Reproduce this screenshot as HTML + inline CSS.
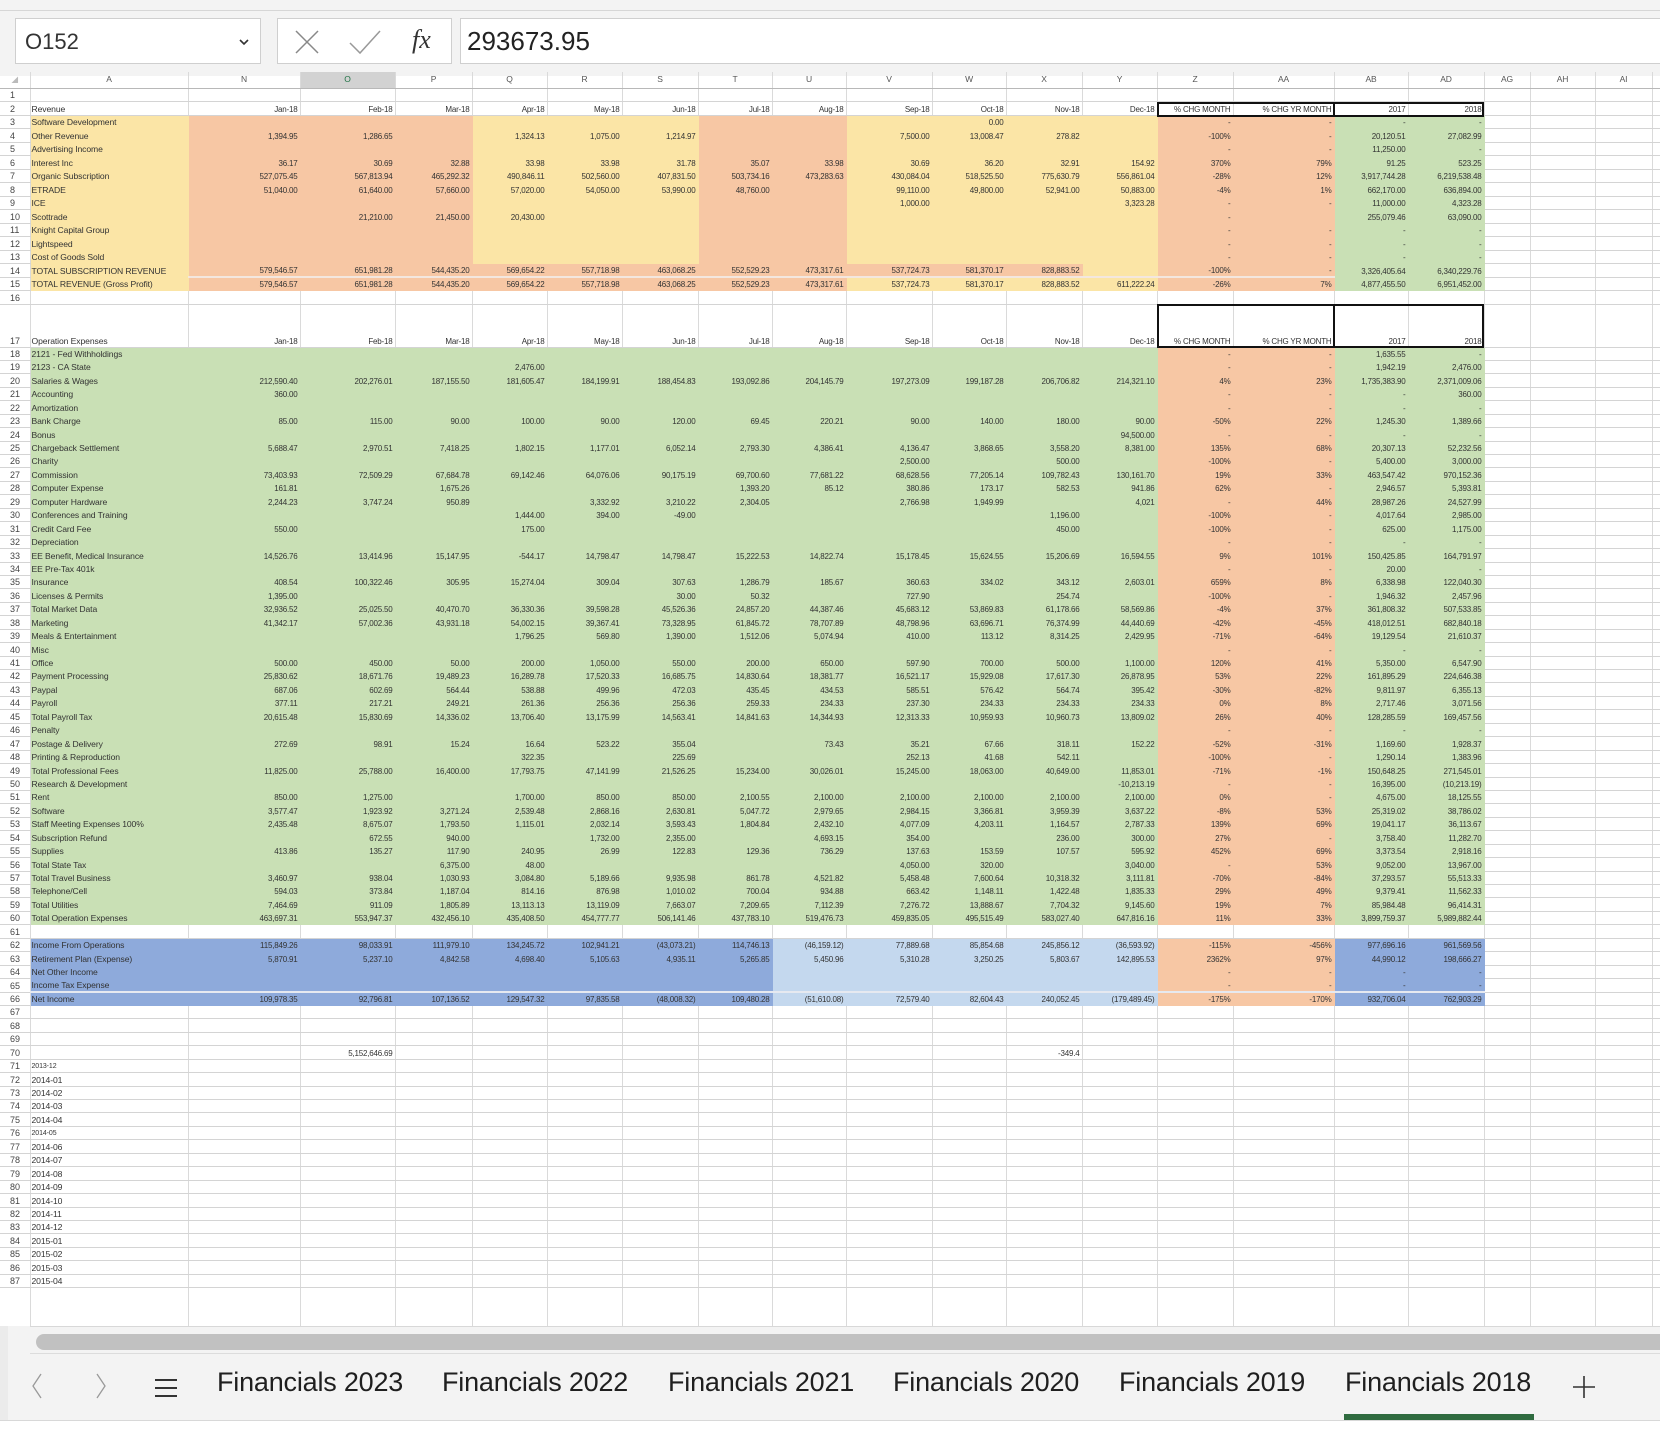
<!DOCTYPE html>
<html><head><meta charset="utf-8">
<style>
*{box-sizing:border-box;margin:0;padding:0}
body{width:1660px;height:1433px;overflow:hidden;background:#fff;font-family:"Liberation Sans",sans-serif;position:relative;color:#222}
.top{position:absolute;left:0;top:0;width:1660px;height:76px;background:#f3f3f3;border-top:10px solid #f3f3f3}
.topline{position:absolute;left:0;top:10px;width:1660px;height:1px;background:#d6d6d6}
.nb{position:absolute;top:18px;height:46px;background:#fff;border:1px solid #cfcfcf}
#grid{position:absolute;left:0;top:72px;border-collapse:collapse;table-layout:fixed;width:1660px}
#grid td{border-right:1px solid #dadada;border-bottom:1px solid #d4d4d4;font-size:8px;line-height:9px;white-space:nowrap;overflow:hidden;text-align:right;vertical-align:bottom;padding:0 2px 1px 1px;color:#333;letter-spacing:-0.2px}
#grid td:nth-child(1){text-align:left;font-size:9px;padding-left:10px;color:#444;letter-spacing:0}
#grid td:nth-child(2){text-align:left;font-size:8.6px;letter-spacing:-0.1px}
#grid tr{height:13.45px}
#grid tr.h1{height:13.5px}
#grid tr.hd{height:16px}
#grid tr.hd td{text-align:center;color:#555;font-size:8.5px;vertical-align:middle;padding:0;border-bottom:1px solid #b8b8b8}
#grid tr.hd td.sel{background:#d2d2d2;color:#217346}
#grid tr.r17{height:43px}
#grid tr.r1 td:nth-child(2),#grid tr.r2 td:nth-child(2),#grid tr.r3 td:nth-child(2){background:#fbe5a6;border-color:#fbe5a6}
#grid tr.r1 td:nth-child(n+3):nth-child(-n+5),#grid tr.r1 td:nth-child(n+9):nth-child(-n+10){background:#f7c7a4;border-color:#f7c7a4}
#grid tr.r1 td:nth-child(n+6):nth-child(-n+8),#grid tr.r1 td:nth-child(n+11):nth-child(-n+14){background:#fbe5a6;border-color:#fbe5a6}
#grid tr.r2 td:nth-child(n+3):nth-child(-n+13){background:#f7c7a4;border-color:#f7c7a4}
#grid tr.r2 td:nth-child(14){background:#fbe5a6;border-color:#fbe5a6}
#grid tr.r3 td:nth-child(n+3):nth-child(-n+10){background:#f7c7a4;border-color:#f7c7a4}
#grid tr.r3 td:nth-child(n+11):nth-child(-n+14){background:#fbe5a6;border-color:#fbe5a6}
#grid tr.r1 td:nth-child(n+15):nth-child(-n+16),#grid tr.r2 td:nth-child(n+15):nth-child(-n+16),#grid tr.r3 td:nth-child(n+15):nth-child(-n+16),
#grid tr.e td:nth-child(n+15):nth-child(-n+16),#grid tr.i td:nth-child(n+15):nth-child(-n+16){background:#f7c7a4;border-color:#f7c7a4}
#grid tr.r1 td:nth-child(n+17):nth-child(-n+18),#grid tr.r2 td:nth-child(n+17):nth-child(-n+18),#grid tr.r3 td:nth-child(n+17):nth-child(-n+18){background:#c9e0b5;border-color:#c9e0b5}
#grid tr.e td:nth-child(n+2):nth-child(-n+14),#grid tr.e td:nth-child(n+17):nth-child(-n+18){background:#c9e0b5;border-color:#c9e0b5}
#grid tr.i td:nth-child(n+2):nth-child(-n+9),#grid tr.i td:nth-child(n+17):nth-child(-n+18){background:#8eaadb;border-color:#8eaadb}
#grid tr.i td:nth-child(n+10):nth-child(-n+14){background:#c4d8ee;border-color:#c4d8ee}
#grid tr.r2 td:nth-child(n+3):nth-child(-n+16){border-bottom:2px solid #f3e7df}
#grid tr.i65 td:nth-child(n+2):nth-child(-n+18){border-bottom:2px solid #e6e9f0}
.box{position:absolute;border:2px solid #111}
.tabs{position:absolute;left:0;top:1326px;width:1660px;height:94px;background:#f3f3f3}
.tab{position:absolute;top:1367px;font-size:27px;color:#1f1f1f;letter-spacing:-0.2px}
</style></head><body>
<div class="top"></div>
<div class="topline"></div>
<div class="nb" style="left:15px;width:246px"><span style="position:absolute;left:9px;top:10px;font-size:22px;color:#333">O152</span><svg style="position:absolute;left:222px;top:18px" width="12" height="10"><path d="M2 3 L6 7 L10 3" stroke="#333" stroke-width="1.6" fill="none"/></svg></div>
<div class="nb" style="left:277px;width:175px"><svg style="position:absolute;left:16px;top:10px" width="26" height="26"><path d="M2 2 L24 24 M24 2 L2 24" stroke="#888" stroke-width="1.5"/></svg><svg style="position:absolute;left:70px;top:10px" width="34" height="26"><path d="M2 14 L12 24 L32 2" stroke="#999" stroke-width="1.5" fill="none"/></svg><span style="position:absolute;left:134px;top:6px;font-family:'Liberation Serif',serif;font-style:italic;font-size:26px;color:#333">fx</span></div>
<div class="nb" style="left:460px;width:1210px"><span style="position:absolute;left:6px;top:7px;font-size:26px;color:#222">293673.95</span></div>

<table id="grid">
<colgroup><col style="width:30px"><col style="width:158px"><col style="width:112px"><col style="width:95px"><col style="width:77px"><col style="width:75px"><col style="width:75px"><col style="width:76px"><col style="width:74px"><col style="width:74px"><col style="width:86px"><col style="width:74px"><col style="width:76px"><col style="width:75px"><col style="width:76px"><col style="width:101px"><col style="width:74px"><col style="width:76px"><col style="width:46px"><col style="width:65px"><col style="width:57px"><col style="width:8px"></colgroup>
<tr class="hd"><td style="color:#bbb">◢<td>A<td>N<td class="sel">O<td>P<td>Q<td>R<td>S<td>T<td>U<td>V<td>W<td>X<td>Y<td>Z<td>AA<td>AB<td>AD<td>AG<td>AH<td>AI<td>
<tr class="h1"><td>1<td><td><td><td><td><td><td><td><td><td><td><td><td><td><td><td><td><td><td><td><td>
<tr class="h1"><td>2<td>Revenue<td>Jan-18<td>Feb-18<td>Mar-18<td>Apr-18<td>May-18<td>Jun-18<td>Jul-18<td>Aug-18<td>Sep-18<td>Oct-18<td>Nov-18<td>Dec-18<td>% CHG MONTH<td>% CHG YR MONTH<td>2017<td>2018<td><td><td><td>
<tr class="h1 r1"><td>3<td>Software Development<td><td><td><td><td><td><td><td><td><td>0.00<td><td><td>-<td>-<td>-<td>-<td><td><td><td>
<tr class="h1 r1"><td>4<td>Other Revenue<td>1,394.95<td>1,286.65<td><td>1,324.13<td>1,075.00<td>1,214.97<td><td><td>7,500.00<td>13,008.47<td>278.82<td><td>-100%<td>-<td>20,120.51<td>27,082.99<td><td><td><td>
<tr class="h1 r1"><td>5<td>Advertising Income<td><td><td><td><td><td><td><td><td><td><td><td><td>-<td>-<td>11,250.00<td>-<td><td><td><td>
<tr class="h1 r1"><td>6<td>Interest Inc<td>36.17<td>30.69<td>32.88<td>33.98<td>33.98<td>31.78<td>35.07<td>33.98<td>30.69<td>36.20<td>32.91<td>154.92<td>370%<td>79%<td>91.25<td>523.25<td><td><td><td>
<tr class="h1 r1"><td>7<td>Organic Subscription<td>527,075.45<td>567,813.94<td>465,292.32<td>490,846.11<td>502,560.00<td>407,831.50<td>503,734.16<td>473,283.63<td>430,084.04<td>518,525.50<td>775,630.79<td>556,861.04<td>-28%<td>12%<td>3,917,744.28<td>6,219,538.48<td><td><td><td>
<tr class="h1 r1"><td>8<td>ETRADE<td>51,040.00<td>61,640.00<td>57,660.00<td>57,020.00<td>54,050.00<td>53,990.00<td>48,760.00<td><td>99,110.00<td>49,800.00<td>52,941.00<td>50,883.00<td>-4%<td>1%<td>662,170.00<td>636,894.00<td><td><td><td>
<tr class="h1 r1"><td>9<td>ICE<td><td><td><td><td><td><td><td><td>1,000.00<td><td><td>3,323.28<td>-<td>-<td>11,000.00<td>4,323.28<td><td><td><td>
<tr class="h1 r1"><td>10<td>Scottrade<td><td>21,210.00<td>21,450.00<td>20,430.00<td><td><td><td><td><td><td><td><td>-<td><td>255,079.46<td>63,090.00<td><td><td><td>
<tr class="h1 r1"><td>11<td>Knight Capital Group<td><td><td><td><td><td><td><td><td><td><td><td><td>-<td>-<td>-<td>-<td><td><td><td>
<tr class="h1 r1"><td>12<td>Lightspeed<td><td><td><td><td><td><td><td><td><td><td><td><td>-<td>-<td>-<td>-<td><td><td><td>
<tr class="h1 r1"><td>13<td>Cost of Goods Sold<td><td><td><td><td><td><td><td><td><td><td><td><td>-<td>-<td>-<td>-<td><td><td><td>
<tr class="h1 r2"><td>14<td>TOTAL SUBSCRIPTION REVENUE<td>579,546.57<td>651,981.28<td>544,435.20<td>569,654.22<td>557,718.98<td>463,068.25<td>552,529.23<td>473,317.61<td>537,724.73<td>581,370.17<td>828,883.52<td><td>-100%<td>-<td>3,326,405.64<td>6,340,229.76<td><td><td><td>
<tr class="h1 r3"><td>15<td>TOTAL REVENUE (Gross Profit)<td>579,546.57<td>651,981.28<td>544,435.20<td>569,654.22<td>557,718.98<td>463,068.25<td>552,529.23<td>473,317.61<td>537,724.73<td>581,370.17<td>828,883.52<td>611,222.24<td>-26%<td>7%<td>4,877,455.50<td>6,951,452.00<td><td><td><td>
<tr class="h1"><td>16<td><td><td><td><td><td><td><td><td><td><td><td><td><td><td><td><td><td><td><td><td>
<tr class="r17"><td>17<td>Operation Expenses<td>Jan-18<td>Feb-18<td>Mar-18<td>Apr-18<td>May-18<td>Jun-18<td>Jul-18<td>Aug-18<td>Sep-18<td>Oct-18<td>Nov-18<td>Dec-18<td>% CHG MONTH<td>% CHG YR MONTH<td>2017<td>2018<td><td><td><td>
<tr class="e"><td>18<td>2121 - Fed Withholdings<td><td><td><td><td><td><td><td><td><td><td><td><td>-<td>-<td>1,635.55<td>-<td><td><td><td>
<tr class="e"><td>19<td>2123 - CA State<td><td><td><td>2,476.00<td><td><td><td><td><td><td><td><td>-<td>-<td>1,942.19<td>2,476.00<td><td><td><td>
<tr class="e"><td>20<td>Salaries &amp; Wages<td>212,590.40<td>202,276.01<td>187,155.50<td>181,605.47<td>184,199.91<td>188,454.83<td>193,092.86<td>204,145.79<td>197,273.09<td>199,187.28<td>206,706.82<td>214,321.10<td>4%<td>23%<td>1,735,383.90<td>2,371,009.06<td><td><td><td>
<tr class="e"><td>21<td>Accounting<td>360.00<td><td><td><td><td><td><td><td><td><td><td><td>-<td>-<td>-<td>360.00<td><td><td><td>
<tr class="e"><td>22<td>Amortization<td><td><td><td><td><td><td><td><td><td><td><td><td>-<td>-<td>-<td>-<td><td><td><td>
<tr class="e"><td>23<td>Bank Charge<td>85.00<td>115.00<td>90.00<td>100.00<td>90.00<td>120.00<td>69.45<td>220.21<td>90.00<td>140.00<td>180.00<td>90.00<td>-50%<td>22%<td>1,245.30<td>1,389.66<td><td><td><td>
<tr class="e"><td>24<td>Bonus<td><td><td><td><td><td><td><td><td><td><td><td>94,500.00<td>-<td>-<td>-<td>-<td><td><td><td>
<tr class="e"><td>25<td>Chargeback Settlement<td>5,688.47<td>2,970.51<td>7,418.25<td>1,802.15<td>1,177.01<td>6,052.14<td>2,793.30<td>4,386.41<td>4,136.47<td>3,868.65<td>3,558.20<td>8,381.00<td>135%<td>68%<td>20,307.13<td>52,232.56<td><td><td><td>
<tr class="e"><td>26<td>Charity<td><td><td><td><td><td><td><td><td>2,500.00<td><td>500.00<td><td>-100%<td>-<td>5,400.00<td>3,000.00<td><td><td><td>
<tr class="e"><td>27<td>Commission<td>73,403.93<td>72,509.29<td>67,684.78<td>69,142.46<td>64,076.06<td>90,175.19<td>69,700.60<td>77,681.22<td>68,628.56<td>77,205.14<td>109,782.43<td>130,161.70<td>19%<td>33%<td>463,547.42<td>970,152.36<td><td><td><td>
<tr class="e"><td>28<td>Computer Expense<td>161.81<td><td>1,675.26<td><td><td><td>1,393.20<td>85.12<td>380.86<td>173.17<td>582.53<td>941.86<td>62%<td>-<td>2,946.57<td>5,393.81<td><td><td><td>
<tr class="e"><td>29<td>Computer Hardware<td>2,244.23<td>3,747.24<td>950.89<td><td>3,332.92<td>3,210.22<td>2,304.05<td><td>2,766.98<td>1,949.99<td><td>4,021<td>-<td>44%<td>28,987.26<td>24,527.99<td><td><td><td>
<tr class="e"><td>30<td>Conferences and Training<td><td><td><td>1,444.00<td>394.00<td>-49.00<td><td><td><td><td>1,196.00<td><td>-100%<td>-<td>4,017.64<td>2,985.00<td><td><td><td>
<tr class="e"><td>31<td>Credit Card Fee<td>550.00<td><td><td>175.00<td><td><td><td><td><td><td>450.00<td><td>-100%<td>-<td>625.00<td>1,175.00<td><td><td><td>
<tr class="e"><td>32<td>Depreciation<td><td><td><td><td><td><td><td><td><td><td><td><td>-<td>-<td>-<td>-<td><td><td><td>
<tr class="e"><td>33<td>EE Benefit, Medical Insurance<td>14,526.76<td>13,414.96<td>15,147.95<td>-544.17<td>14,798.47<td>14,798.47<td>15,222.53<td>14,822.74<td>15,178.45<td>15,624.55<td>15,206.69<td>16,594.55<td>9%<td>101%<td>150,425.85<td>164,791.97<td><td><td><td>
<tr class="e"><td>34<td>EE Pre-Tax 401k<td><td><td><td><td><td><td><td><td><td><td><td><td>-<td>-<td>20.00<td>-<td><td><td><td>
<tr class="e"><td>35<td>Insurance<td>408.54<td>100,322.46<td>305.95<td>15,274.04<td>309.04<td>307.63<td>1,286.79<td>185.67<td>360.63<td>334.02<td>343.12<td>2,603.01<td>659%<td>8%<td>6,338.98<td>122,040.30<td><td><td><td>
<tr class="e"><td>36<td>Licenses &amp; Permits<td>1,395.00<td><td><td><td><td>30.00<td>50.32<td><td>727.90<td><td>254.74<td><td>-100%<td>-<td>1,946.32<td>2,457.96<td><td><td><td>
<tr class="e"><td>37<td>Total Market Data<td>32,936.52<td>25,025.50<td>40,470.70<td>36,330.36<td>39,598.28<td>45,526.36<td>24,857.20<td>44,387.46<td>45,683.12<td>53,869.83<td>61,178.66<td>58,569.86<td>-4%<td>37%<td>361,808.32<td>507,533.85<td><td><td><td>
<tr class="e"><td>38<td>Marketing<td>41,342.17<td>57,002.36<td>43,931.18<td>54,002.15<td>39,367.41<td>73,328.95<td>61,845.72<td>78,707.89<td>48,798.96<td>63,696.71<td>76,374.99<td>44,440.69<td>-42%<td>-45%<td>418,012.51<td>682,840.18<td><td><td><td>
<tr class="e"><td>39<td>Meals &amp; Entertainment<td><td><td><td>1,796.25<td>569.80<td>1,390.00<td>1,512.06<td>5,074.94<td>410.00<td>113.12<td>8,314.25<td>2,429.95<td>-71%<td>-64%<td>19,129.54<td>21,610.37<td><td><td><td>
<tr class="e"><td>40<td>Misc<td><td><td><td><td><td><td><td><td><td><td><td><td>-<td>-<td>-<td>-<td><td><td><td>
<tr class="e"><td>41<td>Office<td>500.00<td>450.00<td>50.00<td>200.00<td>1,050.00<td>550.00<td>200.00<td>650.00<td>597.90<td>700.00<td>500.00<td>1,100.00<td>120%<td>41%<td>5,350.00<td>6,547.90<td><td><td><td>
<tr class="e"><td>42<td>Payment Processing<td>25,830.62<td>18,671.76<td>19,489.23<td>16,289.78<td>17,520.33<td>16,685.75<td>14,830.64<td>18,381.77<td>16,521.17<td>15,929.08<td>17,617.30<td>26,878.95<td>53%<td>22%<td>161,895.29<td>224,646.38<td><td><td><td>
<tr class="e"><td>43<td>Paypal<td>687.06<td>602.69<td>564.44<td>538.88<td>499.96<td>472.03<td>435.45<td>434.53<td>585.51<td>576.42<td>564.74<td>395.42<td>-30%<td>-82%<td>9,811.97<td>6,355.13<td><td><td><td>
<tr class="e"><td>44<td>Payroll<td>377.11<td>217.21<td>249.21<td>261.36<td>256.36<td>256.36<td>259.33<td>234.33<td>237.30<td>234.33<td>234.33<td>234.33<td>0%<td>8%<td>2,717.46<td>3,071.56<td><td><td><td>
<tr class="e"><td>45<td>Total Payroll Tax<td>20,615.48<td>15,830.69<td>14,336.02<td>13,706.40<td>13,175.99<td>14,563.41<td>14,841.63<td>14,344.93<td>12,313.33<td>10,959.93<td>10,960.73<td>13,809.02<td>26%<td>40%<td>128,285.59<td>169,457.56<td><td><td><td>
<tr class="e"><td>46<td>Penalty<td><td><td><td><td><td><td><td><td><td><td><td><td>-<td>-<td>-<td>-<td><td><td><td>
<tr class="e"><td>47<td>Postage &amp; Delivery<td>272.69<td>98.91<td>15.24<td>16.64<td>523.22<td>355.04<td><td>73.43<td>35.21<td>67.66<td>318.11<td>152.22<td>-52%<td>-31%<td>1,169.60<td>1,928.37<td><td><td><td>
<tr class="e"><td>48<td>Printing &amp; Reproduction<td><td><td><td>322.35<td><td>225.69<td><td><td>252.13<td>41.68<td>542.11<td><td>-100%<td>-<td>1,290.14<td>1,383.96<td><td><td><td>
<tr class="e"><td>49<td>Total Professional Fees<td>11,825.00<td>25,788.00<td>16,400.00<td>17,793.75<td>47,141.99<td>21,526.25<td>15,234.00<td>30,026.01<td>15,245.00<td>18,063.00<td>40,649.00<td>11,853.01<td>-71%<td>-1%<td>150,648.25<td>271,545.01<td><td><td><td>
<tr class="e"><td>50<td>Research &amp; Development<td><td><td><td><td><td><td><td><td><td><td><td>-10,213.19<td>-<td>-<td>16,395.00<td>(10,213.19)<td><td><td><td>
<tr class="e"><td>51<td>Rent<td>850.00<td>1,275.00<td><td>1,700.00<td>850.00<td>850.00<td>2,100.55<td>2,100.00<td>2,100.00<td>2,100.00<td>2,100.00<td>2,100.00<td>0%<td>-<td>4,675.00<td>18,125.55<td><td><td><td>
<tr class="e"><td>52<td>Software<td>3,577.47<td>1,923.92<td>3,271.24<td>2,539.48<td>2,868.16<td>2,630.81<td>5,047.72<td>2,979.65<td>2,984.15<td>3,366.81<td>3,959.39<td>3,637.22<td>-8%<td>53%<td>25,319.02<td>38,786.02<td><td><td><td>
<tr class="e"><td>53<td>Staff Meeting Expenses 100%<td>2,435.48<td>8,675.07<td>1,793.50<td>1,115.01<td>2,032.14<td>3,593.43<td>1,804.84<td>2,432.10<td>4,077.09<td>4,203.11<td>1,164.57<td>2,787.33<td>139%<td>69%<td>19,041.17<td>36,113.67<td><td><td><td>
<tr class="e"><td>54<td>Subscription Refund<td><td>672.55<td>940.00<td><td>1,732.00<td>2,355.00<td><td>4,693.15<td>354.00<td><td>236.00<td>300.00<td>27%<td>-<td>3,758.40<td>11,282.70<td><td><td><td>
<tr class="e"><td>55<td>Supplies<td>413.86<td>135.27<td>117.90<td>240.95<td>26.99<td>122.83<td>129.36<td>736.29<td>137.63<td>153.59<td>107.57<td>595.92<td>452%<td>69%<td>3,373.54<td>2,918.16<td><td><td><td>
<tr class="e"><td>56<td>Total State Tax<td><td><td>6,375.00<td>48.00<td><td><td><td><td>4,050.00<td>320.00<td><td>3,040.00<td>-<td>53%<td>9,052.00<td>13,967.00<td><td><td><td>
<tr class="e"><td>57<td>Total Travel Business<td>3,460.97<td>938.04<td>1,030.93<td>3,084.80<td>5,189.66<td>9,935.98<td>861.78<td>4,521.82<td>5,458.48<td>7,600.64<td>10,318.32<td>3,111.81<td>-70%<td>-84%<td>37,293.57<td>55,513.33<td><td><td><td>
<tr class="e"><td>58<td>Telephone/Cell<td>594.03<td>373.84<td>1,187.04<td>814.16<td>876.98<td>1,010.02<td>700.04<td>934.88<td>663.42<td>1,148.11<td>1,422.48<td>1,835.33<td>29%<td>49%<td>9,379.41<td>11,562.33<td><td><td><td>
<tr class="e"><td>59<td>Total Utilities<td>7,464.69<td>911.09<td>1,805.89<td>13,113.13<td>13,119.09<td>7,663.07<td>7,209.65<td>7,112.39<td>7,276.72<td>13,888.67<td>7,704.32<td>9,145.60<td>19%<td>7%<td>85,984.48<td>96,414.31<td><td><td><td>
<tr class="e"><td>60<td>Total Operation Expenses<td>463,697.31<td>553,947.37<td>432,456.10<td>435,408.50<td>454,777.77<td>506,141.46<td>437,783.10<td>519,476.73<td>459,835.05<td>495,515.49<td>583,027.40<td>647,816.16<td>11%<td>33%<td>3,899,759.37<td>5,989,882.44<td><td><td><td>
<tr><td>61<td><td><td><td><td><td><td><td><td><td><td><td><td><td><td><td><td><td><td><td><td>
<tr class="i"><td>62<td>Income From Operations<td>115,849.26<td>98,033.91<td>111,979.10<td>134,245.72<td>102,941.21<td>(43,073.21)<td>114,746.13<td>(46,159.12)<td>77,889.68<td>85,854.68<td>245,856.12<td>(36,593.92)<td>-115%<td>-456%<td>977,696.16<td>961,569.56<td><td><td><td>
<tr class="i"><td>63<td>Retirement Plan (Expense)<td>5,870.91<td>5,237.10<td>4,842.58<td>4,698.40<td>5,105.63<td>4,935.11<td>5,265.85<td>5,450.96<td>5,310.28<td>3,250.25<td>5,803.67<td>142,895.53<td>2362%<td>97%<td>44,990.12<td>198,666.27<td><td><td><td>
<tr class="i"><td>64<td>Net Other Income<td><td><td><td><td><td><td><td><td><td><td><td><td>-<td>-<td>-<td>-<td><td><td><td>
<tr class="i i65"><td>65<td>Income Tax Expense<td><td><td><td><td><td><td><td><td><td><td><td><td>-<td>-<td>-<td>-<td><td><td><td>
<tr class="i"><td>66<td>Net Income<td>109,978.35<td>92,796.81<td>107,136.52<td>129,547.32<td>97,835.58<td>(48,008.32)<td>109,480.28<td>(51,610.08)<td>72,579.40<td>82,604.43<td>240,052.45<td>(179,489.45)<td>-175%<td>-170%<td>932,706.04<td>762,903.29<td><td><td><td>
<tr><td>67<td><td><td><td><td><td><td><td><td><td><td><td><td><td><td><td><td><td><td><td><td>
<tr><td>68<td><td><td><td><td><td><td><td><td><td><td><td><td><td><td><td><td><td><td><td><td>
<tr><td>69<td><td><td><td><td><td><td><td><td><td><td><td><td><td><td><td><td><td><td><td><td>
<tr><td>70<td><td><td>5,152,646.69<td><td><td><td><td><td><td><td><td>-349.4<td><td><td><td><td><td><td><td><td>
<tr><td>71<td style="font-size:7px">2013-12<td><td><td><td><td><td><td><td><td><td><td><td><td><td><td><td><td><td><td><td>
<tr><td>72<td>2014-01<td><td><td><td><td><td><td><td><td><td><td><td><td><td><td><td><td><td><td><td>
<tr><td>73<td>2014-02<td><td><td><td><td><td><td><td><td><td><td><td><td><td><td><td><td><td><td><td>
<tr><td>74<td>2014-03<td><td><td><td><td><td><td><td><td><td><td><td><td><td><td><td><td><td><td><td>
<tr><td>75<td>2014-04<td><td><td><td><td><td><td><td><td><td><td><td><td><td><td><td><td><td><td><td>
<tr><td>76<td style="font-size:7px">2014-05<td><td><td><td><td><td><td><td><td><td><td><td><td><td><td><td><td><td><td><td>
<tr><td>77<td>2014-06<td><td><td><td><td><td><td><td><td><td><td><td><td><td><td><td><td><td><td><td>
<tr><td>78<td>2014-07<td><td><td><td><td><td><td><td><td><td><td><td><td><td><td><td><td><td><td><td>
<tr><td>79<td>2014-08<td><td><td><td><td><td><td><td><td><td><td><td><td><td><td><td><td><td><td><td>
<tr><td>80<td>2014-09<td><td><td><td><td><td><td><td><td><td><td><td><td><td><td><td><td><td><td><td>
<tr><td>81<td>2014-10<td><td><td><td><td><td><td><td><td><td><td><td><td><td><td><td><td><td><td><td>
<tr><td>82<td>2014-11<td><td><td><td><td><td><td><td><td><td><td><td><td><td><td><td><td><td><td><td>
<tr><td>83<td>2014-12<td><td><td><td><td><td><td><td><td><td><td><td><td><td><td><td><td><td><td><td>
<tr><td>84<td>2015-01<td><td><td><td><td><td><td><td><td><td><td><td><td><td><td><td><td><td><td><td>
<tr><td>85<td>2015-02<td><td><td><td><td><td><td><td><td><td><td><td><td><td><td><td><td><td><td><td>
<tr><td>86<td>2015-03<td><td><td><td><td><td><td><td><td><td><td><td><td><td><td><td><td><td><td><td>
<tr><td>87<td>2015-04<td><td><td><td><td><td><td><td><td><td><td><td><td><td><td><td><td><td><td><td>
<tr style="height:40px"><td><td><td><td><td><td><td><td><td><td><td><td><td><td><td><td><td><td><td><td><td><td>
</table>

<div class="box" style="left:1157px;top:102px;width:178px;height:15px"></div>
<div class="box" style="left:1333px;top:102px;width:151px;height:15px"></div>
<div class="box" style="left:1157px;top:304px;width:178px;height:44px"></div>
<div class="box" style="left:1333px;top:304px;width:151px;height:44px"></div>

<div class="tabs">
 <div style="position:absolute;left:30px;top:0;width:1630px;height:1px;background:#d8d8d8"></div>
 <div style="position:absolute;left:36px;top:8px;width:1624px;height:16px;border-radius:8px 0 0 8px;background:#c1c1c1"></div>
 <div style="position:absolute;left:30px;top:27px;width:1630px;height:1px;background:#dcdcdc"></div>
 <div style="position:absolute;left:0;top:0;width:8px;height:94px;background:#ebebeb"></div>
</div>
<svg style="position:absolute;left:30px;top:1372px" width="14" height="28"><path d="M11 2 L3 14 L11 26" stroke="#999" stroke-width="1.3" fill="none"/></svg>
<svg style="position:absolute;left:94px;top:1372px" width="14" height="28"><path d="M3 2 L11 14 L3 26" stroke="#999" stroke-width="1.3" fill="none"/></svg>
<svg style="position:absolute;left:154px;top:1377px" width="24" height="22"><path d="M1 3 H23 M1 11 H23 M1 19 H23" stroke="#333" stroke-width="2"/></svg>
<div class="tab" style="left:217px">Financials 2023</div>
<div class="tab" style="left:442px">Financials 2022</div>
<div class="tab" style="left:668px">Financials 2021</div>
<div class="tab" style="left:893px">Financials 2020</div>
<div class="tab" style="left:1119px">Financials 2019</div>
<div class="tab" style="left:1345px">Financials 2018</div>
<div style="position:absolute;left:1344px;top:1414px;width:190px;height:6px;background:#2f6b3f"></div>
<svg style="position:absolute;left:1572px;top:1375px" width="24" height="24"><path d="M12 1 V23 M1 12 H23" stroke="#333" stroke-width="1.6"/></svg>
<div style="position:absolute;left:0;top:1420px;width:1660px;height:1px;background:#d8d8d8"></div>
</body></html>
